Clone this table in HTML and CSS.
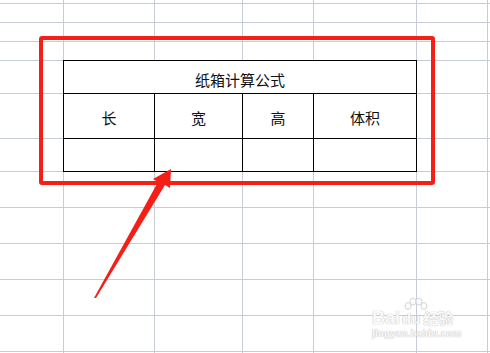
FILE: index.html
```html
<html>
<head>
    <meta charset="utf-8">
    <title>纸箱计算公式</title>
    <link rel="stylesheet" href="styles.css">
</head>
<body>
    <div class="sheet">
        <div class="frame">
            <div class="calc">
                <div class="cell title">纸箱计算公式</div>
                <div class="cell">长</div>
                <div class="cell">宽</div>
                <div class="cell">高</div>
                <div class="cell">体积</div>
                <div class="cell"></div>
                <div class="cell"></div>
                <div class="cell"></div>
                <div class="cell"></div>
            </div>
        </div>

        <!-- pointer to the input row -->
        <svg class="arrow" width="490" height="353" viewBox="0 0 490 353">
            <path d="M171 169 L170 188 L165 185 L96 298 L94 298 L158 182 L153 179 Z" fill="#f51f17"/>
        </svg>

        <div class="watermark">
            <svg class="paw" width="30" height="18" viewBox="0 0 30 18">
                <g fill="#fbfbfb" stroke="#d6d6d6" stroke-width="1">
                    <ellipse cx="8" cy="9" rx="3" ry="3.5"/>
                    <ellipse cx="13" cy="4.5" rx="3" ry="3.5"/>
                    <ellipse cx="19" cy="4.5" rx="3" ry="3.5"/>
                    <ellipse cx="24" cy="9" rx="3" ry="3.5"/>
                </g>
            </svg>
            <div class="brand">Bai<span>du</span><em>经验</em></div>
            <div class="url">jingyan.baidu.com</div>
        </div>
    </div>
</body>
</html>
```

FILE: styles.css
```css
body {
    margin: 0;
    background: #fff;
}
.sheet {
    position: relative;
    width: 490px;
    height: 353px;
    overflow: hidden;
    box-sizing: border-box;
    padding: 36px 0 0 39px;
    background-color: #fff;
    background-repeat: no-repeat;
    background-image:
        linear-gradient(#c7ccd9, #c7ccd9),
        linear-gradient(#c7ccd9, #c7ccd9),
        linear-gradient(#c7ccd9, #c7ccd9),
        linear-gradient(#c7ccd9, #c7ccd9),
        linear-gradient(#c7ccd9, #c7ccd9),
        linear-gradient(#c7ccd9, #c7ccd9),
        linear-gradient(#c7ccd9, #c7ccd9),
        linear-gradient(#c7ccd9, #c7ccd9),
        linear-gradient(#c7ccd9, #c7ccd9),
        linear-gradient(#c7ccd9, #c7ccd9),
        linear-gradient(#c7ccd9, #c7ccd9),
        linear-gradient(#c7ccd9, #c7ccd9),
        linear-gradient(#c7ccd9, #c7ccd9),
        linear-gradient(#c7ccd9, #c7ccd9),
        linear-gradient(#c7ccd9, #c7ccd9),
        linear-gradient(#c7ccd9, #c7ccd9),
        linear-gradient(#c7ccd9, #c7ccd9),
        linear-gradient(#c7ccd9, #c7ccd9);
    background-size:
        1px 100%, 1px 100%, 1px 100%, 1px 100%, 1px 100%, 1px 100%,
        100% 1px, 100% 1px, 100% 1px, 100% 1px, 100% 1px, 100% 1px,
        100% 1px, 100% 1px, 100% 1px, 100% 1px, 100% 1px, 100% 1px;
    background-position:
        63px 0, 154px 0, 242px 0, 313px 0, 416px 0, 487px 0,
        0 3px, 0 22px, 0 41px, 0 60px, 0 93px, 0 138px,
        0 171px, 0 207px, 0 243px, 0 279px, 0 315px, 0 351px;
}
.frame {
    width: 396px;
    height: 149px;
    box-sizing: border-box;
    padding: 20px 0 0 20px;
    border: 4px solid #f51f17;
    border-radius: 3px;
}
.calc {
    display: grid;
    grid-template-columns: 90px 87px 70px 102px;
    grid-template-rows: 32px 44px 32px;
    gap: 1px;
    width: fit-content;
    background: #000;
    border: 1px solid #000;
}
.cell {
    display: flex;
    align-items: center;
    justify-content: center;
    padding-top: 2px;
    background: #fff;
    color: #111;
    font-family: "Noto Sans CJK SC", "Liberation Sans", sans-serif;
    font-size: 15px;
}
.cell.title {
    grid-column: 1 / 5;
    padding-top: 4px;
}
.arrow {
    position: absolute;
    left: 0;
    top: 0;
}
.watermark {
    position: absolute;
    left: 372px;
    top: 297px;
    width: 92px;
    font-family: "Liberation Sans", sans-serif;
    font-weight: bold;
    color: #fafafa;
    text-shadow: 0 0 1px #b9b9b9, 0 0 1px #c9c9c9;
}
.paw {
    display: block;
    margin-left: 28px;
}
.brand {
    margin-top: -6px;
    font-size: 18px;
    line-height: 18px;
    white-space: nowrap;
}
.brand span {
    margin-left: 2px;
    font-size: 15px;
}
.brand em {
    font-style: normal;
    font-family: "Noto Sans CJK SC", sans-serif;
    font-size: 15px;
    margin-left: 3px;
}
.url {
    font-size: 10px;
    line-height: 12px;
    letter-spacing: 0.1px;
}
```
